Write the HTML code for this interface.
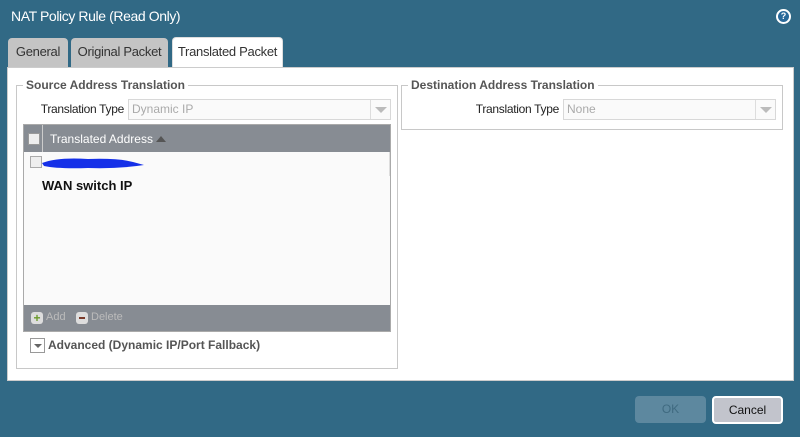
<!DOCTYPE html>
<html><head><style>
*{box-sizing:border-box;margin:0;padding:0}
body{width:800px;height:437px;background:#316985;font-family:"Liberation Sans",sans-serif;position:relative;overflow:hidden;font-size:12px}
.a{position:absolute}
.tab{position:absolute;top:38px;height:29px;border-radius:4px 4px 0 0;background:#c4c4c4;color:#333;font-size:13px;text-align:center;line-height:28px;letter-spacing:-0.3px}
.fs{position:absolute;border:1px solid #c8c8c8}
.leg{position:absolute;top:-8px;background:#fff;padding:0 3px;font-weight:bold;color:#555;font-size:12px}
.sel{position:absolute;height:21px;border:1px solid #d8d8d8;background:#fafafa;color:#aaa;font-size:12px;line-height:19px;padding-left:3px}
.arr{position:absolute;right:0;top:0;width:20px;height:19px;border-left:1px solid #ddd}
.arr:after{content:"";position:absolute;left:4px;top:7px;border-left:6px solid transparent;border-right:6px solid transparent;border-top:6px solid #bbb}
.cb{position:absolute;width:12px;height:12px;border:1px solid #999;background:#eee}
.lbl{position:absolute;width:120px;text-align:right;color:#222;font-size:12px;letter-spacing:-0.3px}
</style></head><body>
<div class="a" style="left:11px;top:8px;color:#fff;font-size:14px;letter-spacing:-0.4px">NAT Policy Rule (Read Only)</div>
<div class="a" style="left:776px;top:9px;width:15px;height:15px;border-radius:50%;background:#fff;"><div style="position:absolute;left:2px;top:2px;width:11px;height:11px;border-radius:50%;background:#2a6a9a;color:#fff;font-size:9px;font-weight:bold;text-align:center;line-height:11px">?</div></div>
<div class="tab" style="left:8px;width:60px">General</div>
<div class="tab" style="left:71px;width:97px">Original Packet</div>
<div class="tab" style="left:172px;width:111px;top:37px;height:31px;background:#fff;border:1px solid #ddd;border-bottom:none">Translated Packet</div>
<div class="a" style="left:7px;top:67px;width:787px;height:314px;background:#fff;border:1px solid #ccc"></div>
<div class="fs" style="left:16px;top:85px;width:382px;height:284px">
 <div class="leg" style="left:6px">Source Address Translation</div>
</div>
<div class="lbl" style="left:4px;top:102px">Translation Type</div>
<div class="sel" style="left:128px;top:99px;width:263px">Dynamic IP<div class="arr"></div></div>
<div class="a" style="left:23px;top:124px;width:368px;height:208px;border:1px solid #aaa;background:#fafafa">
 <div class="a" style="left:0;top:0;width:366px;height:27px;background:#878c93"></div>
 <div class="a" style="left:18px;top:0;width:1px;height:27px;background:#ccc"></div>
 <div class="cb" style="left:4px;top:8px"></div>
 <div class="a" style="left:26px;top:7px;color:#fff;font-size:12px">Translated Address <span style="display:inline-block;border-left:5px solid transparent;border-right:5px solid transparent;border-bottom:6px solid #555;vertical-align:1px"></span></div>
 <div class="a" style="left:365px;top:27px;width:1px;height:24px;background:#ddd"></div>
 <div class="cb" style="left:6px;top:31px;border-color:#aaa"></div>
 <svg class="a" style="left:14px;top:28px" width="110" height="20"><path d="M4 10 Q20 4 50 6 Q80 5 95 9 L106 12 Q80 16 50 15 Q20 16 6 13Z" fill="#1530e8"/></svg>
 <div class="a" style="left:18px;top:53px;font-weight:bold;font-size:13px;color:#111">WAN switch IP</div>
 <div class="a" style="left:0;top:180px;width:366px;height:26px;background:#878c93"></div>
 <div class="a" style="left:7px;top:187px;width:12px;height:12px;border-radius:3px;background:#ddd;color:#6a9a2a;font-weight:bold;font-size:12px;line-height:12px;text-align:center">+</div>
 <div class="a" style="left:22px;top:186px;color:#bbb;font-size:11px">Add</div>
 <div class="a" style="left:52px;top:187px;width:12px;height:12px;border-radius:3px;background:#ddd"><div style="position:absolute;left:3px;top:5px;width:6px;height:2px;background:#7a3a2a"></div></div>
 <div class="a" style="left:67px;top:186px;color:#bbb;font-size:11px">Delete</div>
</div>
<div class="a" style="left:30px;top:338px;width:15px;height:15px;border:1px solid #999"><div style="position:absolute;left:3px;top:5px;border-left:4px solid transparent;border-right:4px solid transparent;border-top:4px solid #666"></div></div>
<div class="a" style="left:48px;top:338px;font-weight:bold;color:#555">Advanced (Dynamic IP/Port Fallback)</div>
<div class="fs" style="left:401px;top:85px;width:382px;height:45px">
 <div class="leg" style="left:6px">Destination Address Translation</div>
</div>
<div class="lbl" style="left:439px;top:102px">Translation Type</div>
<div class="sel" style="left:563px;top:99px;width:213px">None<div class="arr"></div></div>
<div class="a" style="left:635px;top:396px;width:71px;height:27px;border-radius:4px;background:#5d889f;color:#3f6a80;text-align:center;line-height:27px">OK</div>
<div class="a" style="left:712px;top:396px;width:71px;height:28px;border-radius:4px;background:#c2c4cc;border:2px solid #fff;color:#111;text-align:center;line-height:24px">Cancel</div>
</body></html>
